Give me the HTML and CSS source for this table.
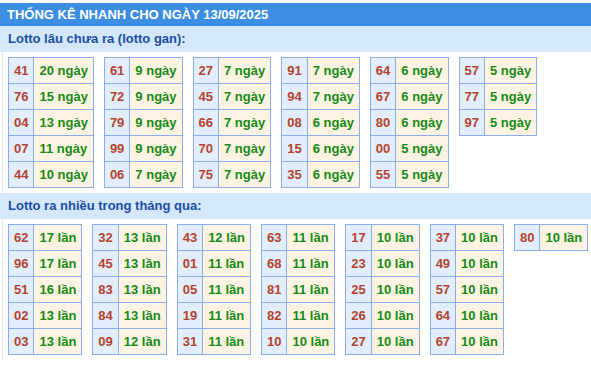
FILE: index.html
```html
<!DOCTYPE html>
<html>
<head>
<meta charset="utf-8">
<link rel="stylesheet" href="styles.css">
</head>
<body>
<div class="page">
  <div class="title">THỐNG KÊ NHANH CHO NGÀY 13/09/2025</div>

  <div class="band">Lotto lâu chưa ra (lotto gan):</div>
  <div class="tables">
    <table class="lt"><tr><td class="n">41</td><td class="v">20 ngày</td></tr><tr><td class="n">76</td><td class="v">15 ngày</td></tr><tr><td class="n">04</td><td class="v">13 ngày</td></tr><tr><td class="n">07</td><td class="v">11 ngày</td></tr><tr><td class="n">44</td><td class="v">10 ngày</td></tr></table>
    <table class="lt"><tr><td class="n">61</td><td class="v">9 ngày</td></tr><tr><td class="n">72</td><td class="v">9 ngày</td></tr><tr><td class="n">79</td><td class="v">9 ngày</td></tr><tr><td class="n">99</td><td class="v">9 ngày</td></tr><tr><td class="n">06</td><td class="v">7 ngày</td></tr></table>
    <table class="lt"><tr><td class="n">27</td><td class="v">7 ngày</td></tr><tr><td class="n">45</td><td class="v">7 ngày</td></tr><tr><td class="n">66</td><td class="v">7 ngày</td></tr><tr><td class="n">70</td><td class="v">7 ngày</td></tr><tr><td class="n">75</td><td class="v">7 ngày</td></tr></table>
    <table class="lt"><tr><td class="n">91</td><td class="v">7 ngày</td></tr><tr><td class="n">94</td><td class="v">7 ngày</td></tr><tr><td class="n">08</td><td class="v">6 ngày</td></tr><tr><td class="n">15</td><td class="v">6 ngày</td></tr><tr><td class="n">35</td><td class="v">6 ngày</td></tr></table>
    <table class="lt"><tr><td class="n">64</td><td class="v">6 ngày</td></tr><tr><td class="n">67</td><td class="v">6 ngày</td></tr><tr><td class="n">80</td><td class="v">6 ngày</td></tr><tr><td class="n">00</td><td class="v">5 ngày</td></tr><tr><td class="n">55</td><td class="v">5 ngày</td></tr></table>
    <table class="lt"><tr><td class="n">57</td><td class="v">5 ngày</td></tr><tr><td class="n">77</td><td class="v">5 ngày</td></tr><tr><td class="n">97</td><td class="v">5 ngày</td></tr></table>
  </div>

  <div class="band">Lotto ra nhiều trong tháng qua:</div>
  <div class="tables">
    <table class="lt"><tr><td class="n">62</td><td class="v">17 lần</td></tr><tr><td class="n">96</td><td class="v">17 lần</td></tr><tr><td class="n">51</td><td class="v">16 lần</td></tr><tr><td class="n">02</td><td class="v">13 lần</td></tr><tr><td class="n">03</td><td class="v">13 lần</td></tr></table>
    <table class="lt"><tr><td class="n">32</td><td class="v">13 lần</td></tr><tr><td class="n">45</td><td class="v">13 lần</td></tr><tr><td class="n">83</td><td class="v">13 lần</td></tr><tr><td class="n">84</td><td class="v">13 lần</td></tr><tr><td class="n">09</td><td class="v">12 lần</td></tr></table>
    <table class="lt"><tr><td class="n">43</td><td class="v">12 lần</td></tr><tr><td class="n">01</td><td class="v">11 lần</td></tr><tr><td class="n">05</td><td class="v">11 lần</td></tr><tr><td class="n">19</td><td class="v">11 lần</td></tr><tr><td class="n">31</td><td class="v">11 lần</td></tr></table>
    <table class="lt"><tr><td class="n">63</td><td class="v">11 lần</td></tr><tr><td class="n">68</td><td class="v">11 lần</td></tr><tr><td class="n">81</td><td class="v">11 lần</td></tr><tr><td class="n">82</td><td class="v">11 lần</td></tr><tr><td class="n">10</td><td class="v">10 lần</td></tr></table>
    <table class="lt"><tr><td class="n">17</td><td class="v">10 lần</td></tr><tr><td class="n">23</td><td class="v">10 lần</td></tr><tr><td class="n">25</td><td class="v">10 lần</td></tr><tr><td class="n">26</td><td class="v">10 lần</td></tr><tr><td class="n">27</td><td class="v">10 lần</td></tr></table>
    <table class="lt"><tr><td class="n">37</td><td class="v">10 lần</td></tr><tr><td class="n">49</td><td class="v">10 lần</td></tr><tr><td class="n">57</td><td class="v">10 lần</td></tr><tr><td class="n">64</td><td class="v">10 lần</td></tr><tr><td class="n">67</td><td class="v">10 lần</td></tr></table>
    <table class="lt"><tr><td class="n">80</td><td class="v">10 lần</td></tr></table>
  </div>
</div>
</body>
</html>
```

FILE: styles.css
```css
html, body {
  margin: 0;
  padding: 0;
  background: #ffffff;
}
.page {
  padding-top: 3px;
  font-family: "Liberation Sans", Arial, sans-serif;
  font-weight: bold;
  font-size: 13px;
}
.title {
  height: 23px;
  line-height: 23px;
  background: #3b8ee1;
  color: #ffffff;
  padding-left: 7px;
  white-space: nowrap;
}
.band {
  height: 26px;
  line-height: 26px;
  background: #d4e7fb;
  color: #1b4ea4;
  padding-left: 8px;
}
.tables {
  display: flex;
  align-items: flex-start;
  gap: 10px;
  margin-left: 2px;
  border-left: 1px solid #d9e4f1;
  padding: 5px 0 5px 5px;
}
.lt {
  border-collapse: separate;
  border-spacing: 0;
  border-top: 1px solid #8aaef0;
  border-left: 1px solid #8aaef0;
  flex: none;
}
.lt td {
  height: 25px;
  padding: 0 5px;
  border-right: 1px solid #8aaef0;
  border-bottom: 1px solid #8aaef0;
  box-sizing: border-box;
  height: 26px;
  white-space: nowrap;
}
.n {
  background: #e2eefd;
  color: #b4432b;
  text-align: center;
}
.v {
  background: #fdf3e2;
  color: #168a16;
}
```
